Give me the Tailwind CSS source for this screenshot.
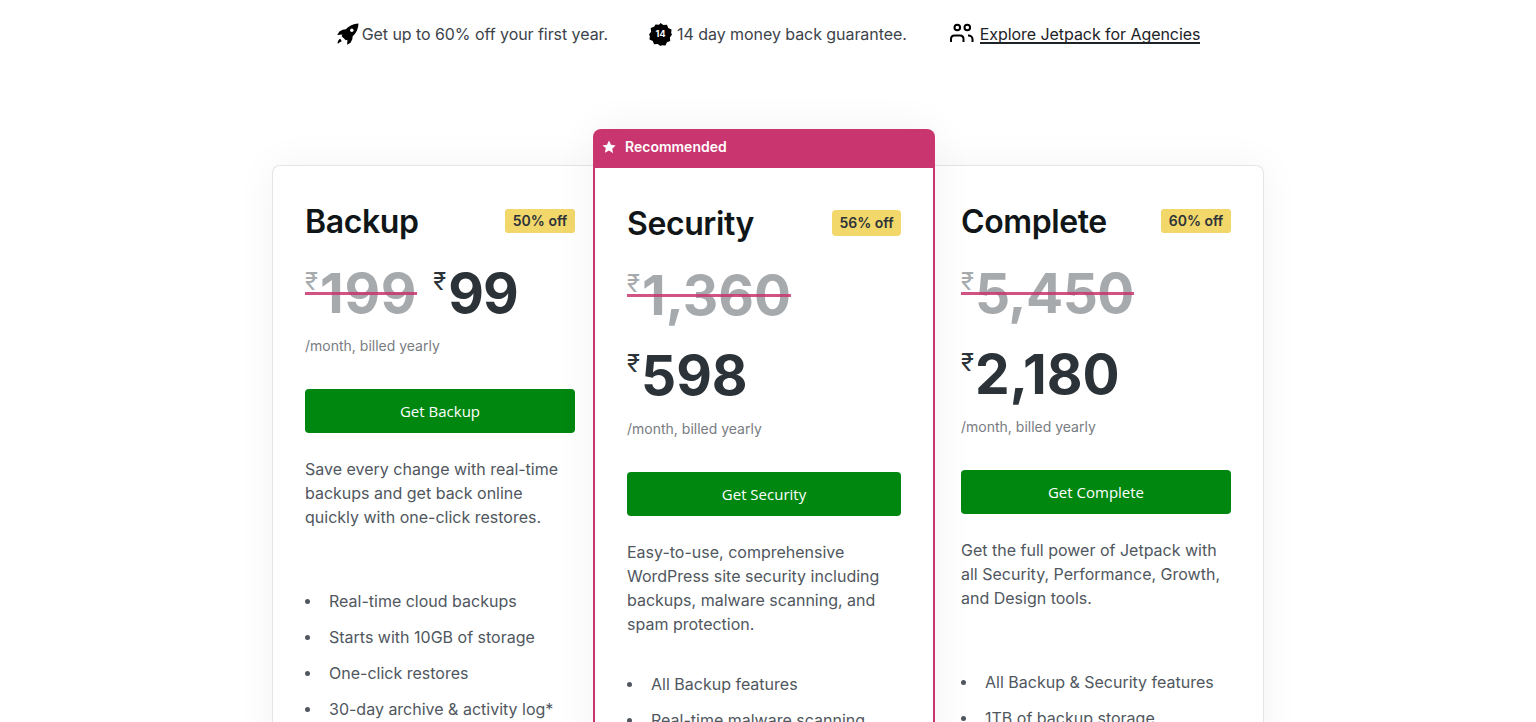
<!DOCTYPE html>
<html lang="en">
<head>
    <meta charset="UTF-8">
    <meta name="viewport" content="width=device-width, initial-scale=1.0">
    <title>Jetpack Pricing</title>
    <script src="https://cdn.jsdelivr.net/npm/@tailwindcss/browser@4"></script>
</head>
<body class="h-screen overflow-hidden bg-white font-['Inter',sans-serif] text-[#50575e]">
    <!-- Top notices -->
    <div class="flex justify-center items-center h-[68px] text-base tracking-[-0.06px] text-[#3c434a]">
        <div class="flex items-center">
            <svg class="w-[23px] h-[23px] mr-[3px]" viewBox="0 0 24 24" fill="#000">
                <path d="M23.500.5c-5.600.2-10 2.400-13.300 6.100L7 7 3.500 8.800l-2.300 3.600 5.300-.3-.6 1.700 4.300 4.300 1.700-.6-.3 5.300 3.600-2.300 1.800-3.500.4-3.200C21.100 10.500 23.300 6.100 23.500.5z"/>
                <circle cx="16.500" cy="7.500" r="1.800" fill="#fff"/>
                <path d="M4.500 16.500c-1.500.6-2.500 2-3 4.500l1 .5c1-1.300 2-2 3.500-2.500z"/>
            </svg>
            <span>Get up to 60% off your first year.</span>
        </div>
        <div class="flex items-center ml-[41px]">
            <span class="relative w-[23px] h-[23px] mr-[5px] flex items-center justify-center">
                <svg class="absolute inset-0" viewBox="0 0 24 24" fill="#000">
                    <path d="M12 0l3 2.200 3.700-.4 1.400 3.500 3.400 1.500-.4 3.700L24 12l-2.200 3 .4 3.700-3.500 1.400-1.500 3.400-3.700-.4L12 24l-3-2.200-3.700.4-1.400-3.500L.5 17.200l.4-3.700L0 12l2.200-3-.4-3.700 3.500-1.400L6.800 1.500l3.700.4z"/>
                </svg>
                <span class="relative text-[9px] font-bold text-white tracking-normal">14</span>
            </span>
            <span>14 day money back guarantee.</span>
        </div>
        <div class="flex items-center ml-[42px]">
            <svg class="w-[26px] h-[24px] mr-[5px]" viewBox="0 0 26 24" fill="none" stroke="#000" stroke-width="2">
                <circle cx="8.300" cy="5.500" r="2.800"/>
                <circle cx="18.300" cy="5.500" r="2.800"/>
                <path d="M2 20v-3c0-2 1.500-3.500 3.500-3.500H11c2 0 3.500 1.500 3.500 3.500v3"/>
                <path d="M19 13.500h.5c2 0 4 1.500 4 3.500v3"/>
            </svg>
            <a href="#" class="block h-5 leading-5 text-[#1d2327] border-b-2 border-[#1d2327]">Explore Jetpack for Agencies</a>
        </div>
    </div>

    <!-- Pricing cards -->
    <div class="flex items-start w-[992px] mx-auto mt-[61px]">
        <div class="w-[321px] mt-[36px] pl-[32px] pr-[18px] pt-[32px] border border-r-0 border-[#e5e5e5] rounded-l-lg shadow-[0_0_40px_rgba(0,0,0,0.05)] h-[700px]">
            <div class="flex justify-between items-start h-[46px]">
                <h2 class="pt-px text-[32px] leading-[46px] font-semibold text-[#101517] tracking-[-0.4px]">Backup</h2>
                <span class="mt-[11px] w-[70px] text-center h-6 leading-6 rounded-[3px] bg-[#f2d76b] text-sm font-semibold text-[#2c3338]">50% off</span>
            </div>
            <div class="flex flex-wrap gap-x-[16px] mt-[19px] h-[60px] font-bold">
                <div class="relative flex text-[#a7aaad]">
                    <span class="text-2xl font-normal leading-[38px] mr-[2px]">₹</span>
                    <span class="text-[55px] leading-[60px] tracking-[0.7px]">199</span>
                    <span class="absolute left-0 right-0 top-[29px] h-[3px] bg-[#c9356e]/85"></span>
                </div>
                <div class="flex text-[#2c3338]">
                    <span class="text-2xl font-normal leading-[38px] mr-[2px]">₹</span>
                    <span class="text-[55px] leading-[60px] tracking-[-1px]">99</span>
                </div>
            </div>
            <p class="mt-[13px] text-sm leading-[20px] text-[#787c82]">/month, billed yearly</p>
            <button class="mt-[33px] w-full h-[44px] rounded bg-[#008710] text-white font-['Open_Sans',sans-serif] text-[15px]">Get Backup</button>
            <p class="mt-[24px] h-[96px] text-base leading-6">Save every change with real-time backups and get back online quickly with one-click restores.</p>
            <ul class="mt-[36px] text-base">
                <li class="flex items-center mb-3 leading-6"><span class="w-[5px] h-[5px] mr-[19px] rounded-full bg-[#50575e]"></span>Real-time cloud backups</li>
                <li class="flex items-center mb-3 leading-6"><span class="w-[5px] h-[5px] mr-[19px] rounded-full bg-[#50575e]"></span>Starts with 10GB of storage</li>
                <li class="flex items-center mb-3 leading-6"><span class="w-[5px] h-[5px] mr-[19px] rounded-full bg-[#50575e]"></span>One-click restores</li>
                <li class="flex items-center mb-3 leading-6"><span class="w-[5px] h-[5px] mr-[19px] rounded-full bg-[#50575e]"></span>30-day archive &amp; activity log*</li>
            </ul>
        </div>

        <div class="relative z-10 w-[342px] bg-white rounded-t-lg shadow-[0_0_40px_rgba(0,0,0,0.06)]">
            <div class="flex items-center h-[39px] pb-1 bg-[#c9356e] rounded-t-lg px-[9px] text-white text-sm font-semibold">
                <svg class="w-[14px] h-[14px] mr-[9px]" viewBox="0 0 24 24" fill="#fff"><path d="M12 1l3.400 7.300 7.900 1-5.800 5.500 1.500 7.900L12 17.900l-7 3.800 1.500-7.900L.7 9.300l7.900-1z"/></svg>
                Recommended
            </div>
            <div class="px-[32px] pt-[32px] border-x-2 border-[#c9356e] h-[700px]">
                <div class="flex justify-between items-start h-[46px]">
                    <h2 class="pt-px text-[32px] leading-[46px] font-semibold text-[#101517] tracking-[-0.4px]">Security</h2>
                    <span class="mt-[10px] w-[69px] text-center h-[26px] leading-[26px] rounded-[4px] bg-[#f2d76b] text-sm font-semibold text-[#2c3338]">56% off</span>
                </div>
                <div class="mt-[19px] font-bold">
                    <div class="relative inline-flex text-[#a7aaad] h-[60px]">
                        <span class="text-2xl font-normal leading-[38px] mr-[2px]">₹</span>
                        <span class="text-[55px] leading-[60px]">1,360</span>
                        <span class="absolute left-0 right-0 top-[29px] h-[3px] bg-[#c9356e]/85"></span>
                    </div>
                    <div class="flex text-[#2c3338] h-[60px] mt-[20px]">
                        <span class="text-2xl font-normal leading-[38px] mr-[1px]">₹</span>
                        <span class="text-[55px] leading-[60px]">598</span>
                    </div>
                </div>
                <p class="mt-[14px] text-sm leading-[20px] text-[#787c82]">/month, billed yearly</p>
                <button class="mt-[33px] w-full h-[44px] rounded bg-[#008710] text-white font-['Open_Sans',sans-serif] text-[15px]">Get Security</button>
                <p class="mt-[24px] h-[96px] text-base leading-6">Easy-to-use, comprehensive WordPress site security including backups, malware scanning, and spam protection.</p>
                <ul class="mt-[36px] text-base">
                    <li class="flex items-center mb-3 leading-6"><span class="w-[5px] h-[5px] mr-[19px] rounded-full bg-[#50575e]"></span>All Backup features</li>
                    <li class="flex items-center mb-3 leading-6"><span class="w-[5px] h-[5px] mr-[19px] rounded-full bg-[#50575e]"></span>Real-time malware scanning</li>
                    <li class="flex items-center mb-3 leading-6"><span class="w-[5px] h-[5px] mr-[19px] rounded-full bg-[#50575e]"></span>Comment &amp; form spam protection</li>
                </ul>
            </div>
        </div>

        <div class="w-[329px] mt-[36px] pl-[26px] pr-[32px] pt-[32px] border border-l-0 border-[#e5e5e5] rounded-r-lg shadow-[0_0_40px_rgba(0,0,0,0.05)] h-[700px]">
            <div class="flex justify-between items-start h-[46px]">
                <h2 class="pt-px text-[32px] leading-[46px] font-semibold text-[#101517] tracking-[-0.4px]">Complete</h2>
                <span class="mt-[11px] w-[70px] text-center h-6 leading-6 rounded-[3px] bg-[#f2d76b] text-sm font-semibold text-[#2c3338]">60% off</span>
            </div>
            <div class="mt-[19px] font-bold">
                <div class="relative inline-flex text-[#a7aaad] h-[60px]">
                    <span class="text-2xl font-normal leading-[38px] mr-[1px]">₹</span>
                    <span class="text-[55px] leading-[60px] tracking-[-0.6px]">5,450</span>
                    <span class="absolute left-0 right-0 top-[29px] h-[3px] bg-[#c9356e]/85"></span>
                </div>
                <div class="flex text-[#2c3338] h-[60px] mt-[21px]">
                    <span class="text-2xl font-normal leading-[38px] mr-[1px]">₹</span>
                    <span class="text-[55px] leading-[60px]">2,180</span>
                </div>
            </div>
            <p class="mt-[13px] text-sm leading-[20px] text-[#787c82]">/month, billed yearly</p>
            <button class="mt-[33px] w-full h-[44px] rounded bg-[#008710] text-white font-['Open_Sans',sans-serif] text-[15px]">Get Complete</button>
            <p class="mt-[24px] h-[96px] text-base leading-6">Get the full power of Jetpack with all Security, Performance, Growth, and Design tools.</p>
            <ul class="mt-[36px] text-base">
                <li class="flex items-center mb-3 leading-6"><span class="w-[5px] h-[5px] mr-[19px] rounded-full bg-[#50575e]"></span>All Backup &amp; Security features</li>
                <li class="flex items-center mb-3 leading-6"><span class="w-[5px] h-[5px] mr-[19px] rounded-full bg-[#50575e]"></span>1TB of backup storage</li>
                <li class="flex items-center mb-3 leading-6"><span class="w-[5px] h-[5px] mr-[19px] rounded-full bg-[#50575e]"></span>Site search &amp; CDN</li>
            </ul>
        </div>
    </div>
</body>
</html>
